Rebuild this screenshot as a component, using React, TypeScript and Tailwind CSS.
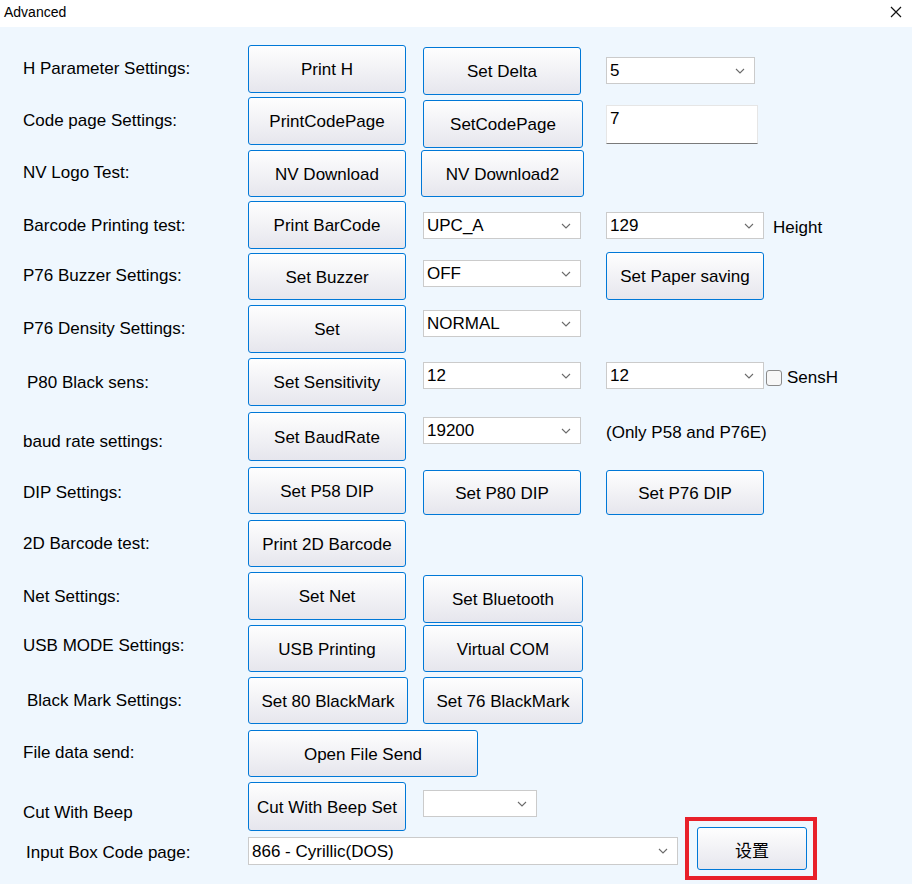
import React from "react";

type Props = { children?: React.ReactNode; className?: string };

function Btn({ children, className = "" }: Props) {
  return (
    <button
      className={`flex items-center justify-center rounded-[3px] border border-[#0078d7] bg-linear-to-b from-[#fefefe] to-[#e6e6ed] pt-[2px] text-[17px] leading-5 text-black ${className}`}
    >
      {children}
    </button>
  );
}

function Chevron() {
  return (
    <svg width="10" height="6" viewBox="0 0 10 6" className="shrink-0">
      <polyline points="1,1 5,5 9,1" fill="none" stroke="#6b6b6b" strokeWidth="1.1" />
    </svg>
  );
}

function Sel({ children, className = "" }: Props) {
  return (
    <div
      className={`flex h-[27px] items-center justify-between border border-[#cbcbcb] bg-white pl-[3px] pr-[9px] text-[17px] leading-5 text-black ${className}`}
    >
      <span className="pt-[1px]">{children}</span>
      <Chevron />
    </div>
  );
}

function Label({ children, className = "" }: Props) {
  return <div className={`pl-[23px] text-[17px] leading-5 text-black ${className}`}>{children}</div>;
}

const row = "grid grid-cols-[248px_175px_183px_1fr] items-start";

export default function App() {
  return (
    <div className="flex h-[884px] w-[912px] flex-col overflow-hidden bg-[#eff7fe] font-['Liberation_Sans',Arial,sans-serif]">
      {/* title bar */}
      <div className="flex h-[27px] shrink-0 items-center justify-between bg-white pl-[4px] pr-[10px]">
        <span className="mb-[3px] text-[14px] leading-4 text-black">Advanced</span>
        <svg width="12" height="12" viewBox="0 0 12 12" className="mb-[4px]">
          <path d="M1 1L11 11M11 1L1 11" stroke="#111" strokeWidth="1.2" />
        </svg>
      </div>

      <div className="flex flex-col pt-[18px]">
        <div className={`${row} h-[52px]`}>
          <Label className="mt-[14px]">H Parameter Settings:</Label>
          <Btn className="h-[48px] w-[158px]">Print H</Btn>
          <Btn className="mt-[2px] h-[48px] w-[158px]">Set Delta</Btn>
          <Sel className="mt-[12px] w-[149px]">5</Sel>
        </div>

        <div className={`${row} h-[53px]`}>
          <Label className="mt-[14px]">Code page Settings:</Label>
          <Btn className="h-[48px] w-[158px]">PrintCodePage</Btn>
          <Btn className="mt-[3px] h-[48px] w-[160px]">SetCodePage</Btn>
          <div className="mt-[8px] h-[39px] w-[152px] border border-[#e6e6e6] border-b-[#7a7a7a] bg-white pl-[3px] pt-[3px] text-[17px] leading-5 text-black">
            7
          </div>
        </div>

        <div className={`${row} h-[51px]`}>
          <Label className="mt-[13px]">NV Logo Test:</Label>
          <Btn className="h-[47px] w-[158px]">NV Download</Btn>
          <Btn className="-ml-[2px] h-[47px] w-[163px]">NV Download2</Btn>
          <div />
        </div>

        <div className={`${row} h-[52px]`}>
          <Label className="mt-[15px]">Barcode Printing test:</Label>
          <Btn className="h-[48px] w-[158px]">Print BarCode</Btn>
          <Sel className="mt-[11px] w-[158px]">UPC_A</Sel>
          <div className="flex items-start">
            <Sel className="mt-[11px] w-[158px]">129</Sel>
            <span className="ml-[9px] mt-[17px] text-[17px] leading-5 text-black">Height</span>
          </div>
        </div>

        <div className={`${row} h-[52px]`}>
          <Label className="mt-[13px]">P76 Buzzer Settings:</Label>
          <Btn className="h-[47px] w-[158px]">Set Buzzer</Btn>
          <Sel className="mt-[7px] w-[158px]">OFF</Sel>
          <Btn className="-mt-[1px] h-[48px] w-[158px]">Set Paper saving</Btn>
        </div>

        <div className={`${row} h-[53px]`}>
          <Label className="mt-[14px]">P76 Density Settings:</Label>
          <Btn className="h-[48px] w-[158px]">Set</Btn>
          <Sel className="mt-[5px] w-[158px]">NORMAL</Sel>
          <div />
        </div>

        <div className={`${row} h-[54px]`}>
          <Label className="mt-[15px] pl-[27px]">P80 Black sens:</Label>
          <Btn className="h-[48px] w-[158px]">Set Sensitivity</Btn>
          <Sel className="mt-[4px] w-[158px]">12</Sel>
          <div className="flex items-start">
            <Sel className="mt-[4px] w-[158px]">12</Sel>
            <span className="ml-[2px] mt-[12px] h-[16px] w-[16px] rounded-[3px] border border-[#8a8a8a] bg-[#f7f7f7]" />
            <span className="ml-[5px] mt-[10px] text-[17px] leading-5 text-black">SensH</span>
          </div>
        </div>

        <div className={`${row} h-[55px]`}>
          <Label className="mt-[20px]">baud rate settings:</Label>
          <Btn className="h-[49px] w-[158px]">Set BaudRate</Btn>
          <Sel className="mt-[5px] w-[158px]">19200</Sel>
          <span className="mt-[11px] text-[17px] leading-5 text-black">(Only P58 and P76E)</span>
        </div>

        <div className={`${row} h-[53px]`}>
          <Label className="mt-[16px]">DIP Settings:</Label>
          <Btn className="h-[47px] w-[158px]">Set P58 DIP</Btn>
          <Btn className="mt-[3px] h-[45px] w-[158px]">Set P80 DIP</Btn>
          <Btn className="mt-[3px] h-[45px] w-[158px]">Set P76 DIP</Btn>
        </div>

        <div className={`${row} h-[52px]`}>
          <Label className="mt-[14px]">2D Barcode test:</Label>
          <Btn className="h-[47px] w-[158px]">Print 2D Barcode</Btn>
          <div />
          <div />
        </div>

        <div className={`${row} h-[53px]`}>
          <Label className="mt-[15px]">Net Settings:</Label>
          <Btn className="h-[48px] w-[158px]">Set Net</Btn>
          <Btn className="mt-[3px] h-[48px] w-[160px]">Set Bluetooth</Btn>
          <div />
        </div>

        <div className={`${row} h-[52px]`}>
          <Label className="mt-[11px]">USB MODE Settings:</Label>
          <Btn className="h-[47px] w-[158px]">USB Printing</Btn>
          <Btn className="h-[47px] w-[160px]">Virtual COM</Btn>
          <div />
        </div>

        <div className={`${row} h-[53px]`}>
          <Label className="mt-[14px] pl-[27px]">Black Mark Settings:</Label>
          <Btn className="h-[47px] w-[160px]">Set 80 BlackMark</Btn>
          <Btn className="h-[47px] w-[160px]">Set 76 BlackMark</Btn>
          <div />
        </div>

        <div className={`${row} h-[52px]`}>
          <Label className="mt-[13px]">File data send:</Label>
          <Btn className="h-[47px] w-[230px]">Open File Send</Btn>
          <div />
          <div />
        </div>

        <div className={`${row} h-[35px]`}>
          <Label className="mt-[21px]">Cut With Beep</Label>
          <Btn className="h-[49px] w-[158px]">Cut With Beep Set</Btn>
          <Sel className="mt-[8px] w-[114px]" />
          <div />
        </div>

        <div className="flex items-start">
          <Label className="mt-[26px] w-[248px] pl-[26px]">Input Box Code page:</Label>
          <Sel className="mt-[20px] h-[28px] w-[430px]">866 - Cyrillic(DOS)</Sel>
          <div className="ml-[7px] h-[63px] w-[132px] border-4 border-[#e8202a] pl-[8px] pt-[6px]">
            <Btn className="h-[43px] w-[110px] font-['Noto_Sans_CJK_SC',sans-serif] text-[16px]">设置</Btn>
          </div>
        </div>
      </div>
    </div>
  );
}
